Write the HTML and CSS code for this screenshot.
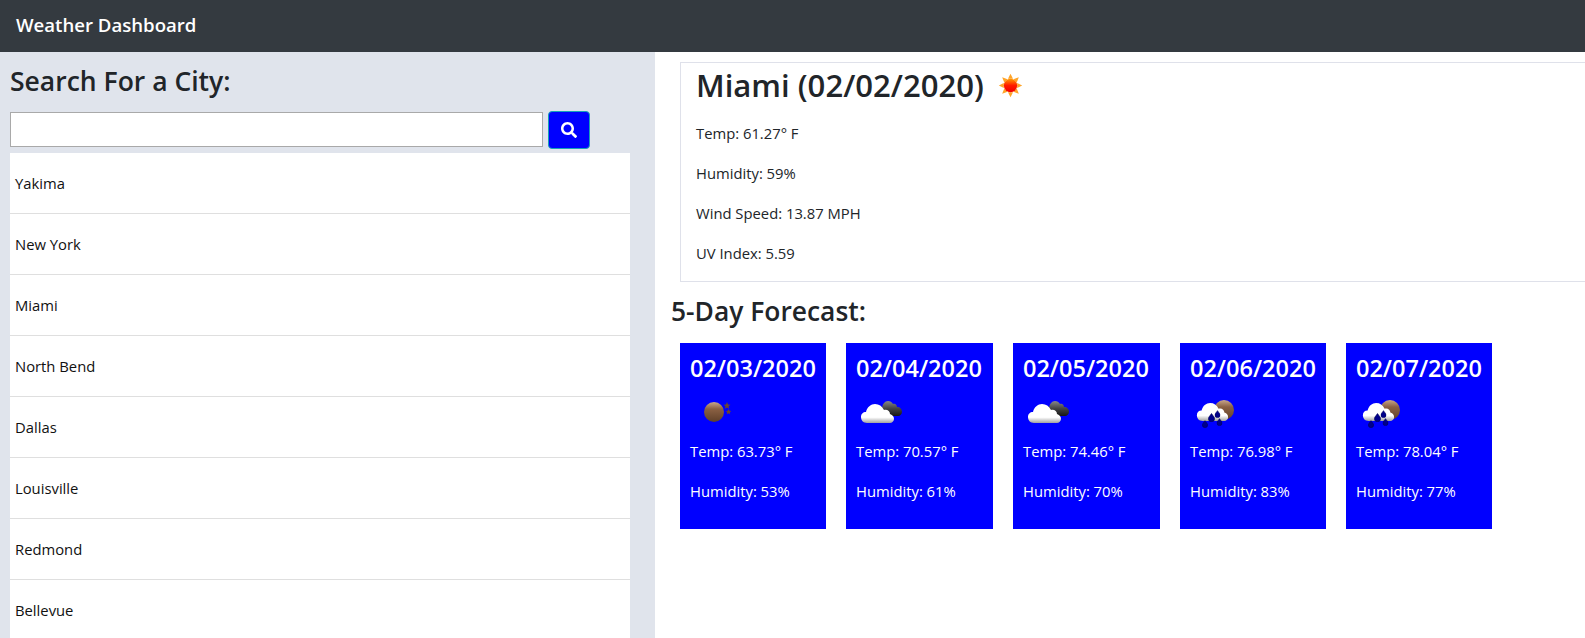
FILE: index.html
```html
<!DOCTYPE html>
<html>
<head>
	<title>Weather Dashboard</title>
	<meta charset="utf-8">
	<link rel="stylesheet" href="styles.css">
</head>
<body>
	<svg class="defs" width="0" height="0">
		<defs>
			<linearGradient id="sun_core" x1="0" y1="0" x2="0" y2="1">
				<stop offset="0" stop-color="#ff9a00"/>
				<stop offset="0.5" stop-color="#ff1a00"/>
				<stop offset="1" stop-color="#f00000"/>
			</linearGradient>
			<linearGradient id="moon_body" x1="0" y1="0" x2="0" y2="1">
				<stop offset="0" stop-color="#c9a78c"/>
				<stop offset="0.35" stop-color="#8a6043"/>
				<stop offset="1" stop-color="#5f4029"/>
			</linearGradient>
			<linearGradient id="cloud_white" x1="0" y1="0" x2="0" y2="1">
				<stop offset="0" stop-color="#fff"/>
				<stop offset="0.7" stop-color="#fff"/>
				<stop offset="1" stop-color="#a0a0a0"/>
			</linearGradient>
			<linearGradient id="cloud_dark" x1="0" y1="0" x2="0" y2="1">
				<stop offset="0" stop-color="#888"/>
				<stop offset="0.5" stop-color="#444"/>
				<stop offset="1" stop-color="#161616"/>
			</linearGradient>
			<symbol id="icon_cloud" viewBox="0 0 33 19">
				<path d="M6 19C2 19 0 16 0 13C0 10 2 8 5 8C6 3 10 0 14 0C18 0 21 2 23 6C26 5 29 7 29 10C32 11 33 13 33 15C33 17 31 19 29 19Z" fill="url(#cloud_white)"/>
			</symbol>
			<symbol id="icon_back_cloud" viewBox="0 0 20 15">
				<path d="M0 8C0 3 3 0 6 0C8 0 10 1 11 3C13 2 15 4 15 6C18 6 20 8 20 11C20 13 18 15 16 15H8Z" fill="url(#cloud_dark)"/>
			</symbol>
			<symbol id="icon_drop" viewBox="0 0 8 10">
				<path d="M4 .5C2.500 3 .5 4.500 .5 6.300a3.500 3.500 0 0 0 7 0C7.500 4.500 5.500 3 4 .5Z" fill="#00008b" stroke="#000060" stroke-width="0.8"/>
			</symbol>
			<symbol id="icon_rain" viewBox="0 0 50 50">
				<circle cx="34" cy="22" r="10" fill="url(#moon_body)"/>
				<use href="#icon_cloud" x="5" y="15" width="35" height="18"/>
				<use href="#icon_drop" x="12" y="32" width="6" height="8"/>
				<use href="#icon_drop" x="18" y="25" width="7" height="9"/>
				<use href="#icon_drop" x="24.500" y="22" width="6" height="8"/>
				<use href="#icon_drop" x="26.500" y="30" width="6" height="8"/>
			</symbol>
			<symbol id="icon_clouds" viewBox="0 0 50 50">
				<use href="#icon_back_cloud" x="26" y="13" width="20" height="15"/>
				<use href="#icon_cloud" x="5" y="16" width="33" height="19"/>
			</symbol>
		</defs>
	</svg>

	<nav class="navbar">Weather Dashboard</nav>

	<div class="layout">
		<aside class="sidebar">
			<h2 class="sidebar_title">Search For a City:</h2>
			<form class="search">
				<input class="search_input" type="text">
				<button class="search_btn" type="button">
					<svg class="search_icon" viewBox="0 0 512 512"><path fill="#fff" d="M505 442.700L405.300 343c-4.500-4.500-10.600-7-17-7H372c27.600-35.300 44-79.700 44-128C416 93.100 322.900 0 208 0S0 93.100 0 208s93.100 208 208 208c48.300 0 92.700-16.400 128-44v16.300c0 6.400 2.500 12.500 7 17l99.700 99.700c9.400 9.400 24.600 9.400 33.900 0l28.300-28.300c9.400-9.400 9.400-24.600.1-34zM208 336c-70.700 0-128-57.200-128-128 0-70.700 57.200-128 128-128 70.700 0 128 57.200 128 128 0 70.700-57.200 128-128 128z"/></svg>
				</button>
			</form>
			<ul class="city_list">
				<li>Yakima</li>
				<li>New York</li>
				<li>Miami</li>
				<li>North Bend</li>
				<li>Dallas</li>
				<li>Louisville</li>
				<li>Redmond</li>
				<li>Bellevue</li>
			</ul>
		</aside>

		<main class="content">
			<section class="today">
				<h1 class="today_title">Miami (02/02/2020)
					<svg class="today_icon" viewBox="0 0 30 30">
						<path fill="#ffa428" d="M15 1l3 6h-6zM15 29l3-6h-6zM1 15l6-3v6zM29 15l-6-3v6zM5 5l6.500 2.500-4 4zM25 5l-2.500 6.500-4-4zM5 25l2.500-6.500 4 4zM25 25l-6.500-2.500 4-4z"/>
						<circle cx="15" cy="15" r="8" fill="url(#sun_core)"/>
					</svg>
				</h1>
				<p>Temp: 61.27° F</p>
				<p>Humidity: 59%</p>
				<p>Wind Speed: 13.87 MPH</p>
				<p>UV Index: 5.59</p>
			</section>

			<h2 class="forecast_title">5-Day Forecast:</h2>
			<div class="forecast">
				<div class="day">
					<h3 class="day_date">02/03/2020</h3>
					<svg class="day_icon" viewBox="0 0 50 50">
						<circle cx="24" cy="24" r="10" fill="url(#moon_body)"/>
						<path d="M37 14l1 2.500 2.500.2-2 1.600.7 2.500-2.200-1.400-2.200 1.400.7-2.500-2-1.600 2.500-.2zM38.500 21l.8 1.800 1.900.2-1.400 1.300.4 1.900-1.700-1-1.700 1 .4-1.900-1.400-1.300 1.900-.2z" fill="#6b4630"/>
					</svg>
					<p>Temp: 63.73° F</p>
					<p>Humidity: 53%</p>
				</div>
				<div class="day day_wide">
					<h3 class="day_date">02/04/2020</h3>
					<svg class="day_icon" viewBox="0 0 50 50"><use href="#icon_clouds"/></svg>
					<p>Temp: 70.57° F</p>
					<p>Humidity: 61%</p>
				</div>
				<div class="day day_wide">
					<h3 class="day_date">02/05/2020</h3>
					<svg class="day_icon" viewBox="0 0 50 50"><use href="#icon_clouds"/></svg>
					<p>Temp: 74.46° F</p>
					<p>Humidity: 70%</p>
				</div>
				<div class="day">
					<h3 class="day_date">02/06/2020</h3>
					<svg class="day_icon" viewBox="0 0 50 50"><use href="#icon_rain"/></svg>
					<p>Temp: 76.98° F</p>
					<p>Humidity: 83%</p>
				</div>
				<div class="day">
					<h3 class="day_date">02/07/2020</h3>
					<svg class="day_icon" viewBox="0 0 50 50"><use href="#icon_rain"/></svg>
					<p>Temp: 78.04° F</p>
					<p>Humidity: 77%</p>
				</div>
			</div>
		</main>
	</div>
</body>
</html>
```

FILE: styles.css
```css
html, body {
	margin: 0px;
	padding: 0px;
	height: 100%;
	overflow: hidden;
}

body {
	display: flex;
	flex-direction: column;
	font-family: "Open Sans", "Noto Sans", sans-serif;
	font-size: 14.800px;
	line-height: 24px;
	color: #212529;
	background-color: #FFF;
}

p {
	margin: 0px 0px 16px 0px;
}

.defs {
	position: absolute;
}

.navbar {
	height: 52px;
	flex: none;
	box-sizing: border-box;
	padding: 13px 16px;
	background-color: #343a40;
	color: #FFF;
	font-size: 18.600px;
	font-weight: 600;
}

.layout {
	display: flex;
	flex: 1;
	min-height: 0;
}

.sidebar {
	width: 655px;
	flex: none;
	box-sizing: border-box;
	padding: 10px 0px 0px 10px;
	background-color: #e0e4ec;
}

.sidebar_title {
	margin: 0px 0px 11px 0px;
	height: 38px;
	font-size: 26.500px;
	font-weight: 600;
	line-height: 38px;
}

.search {
	display: flex;
	align-items: flex-start;
	gap: 5px;
	height: 38px;
}

.search_input {
	width: 533px;
	height: 35px;
	box-sizing: border-box;
	margin-top: 1px;
	border: 1px solid #a9a9a9;
	background-color: #FFF;
	padding: 0px;
}

.search_btn {
	display: flex;
	align-items: center;
	justify-content: center;
	width: 42px;
	height: 38px;
	padding: 0px;
	border: 1px solid #17a2b8;
	border-radius: 4px;
	background-color: #0000FF;
}

.search_icon {
	width: 16px;
	height: 16px;
}

.city_list {
	list-style: none;
	width: 620px;
	margin: 4px 0px 0px 0px;
	padding: 0px;
	background-color: #FFF;
}

.city_list li {
	height: 61px;
	box-sizing: border-box;
	padding: 18px 5px;
	border-bottom: 1px solid #dfdfdf;
	color: #111;
}

.content {
	flex: 1;
	min-width: 0;
	padding: 10px 0px 0px 16px;
}

.today {
	margin: 0px -1px 0px 9px;
	height: 220px;
	box-sizing: border-box;
	padding: 0px 15px;
	border: 1px solid #dfe1ea;
}

.today_title {
	display: flex;
	align-items: center;
	gap: 14px;
	margin: 0px 0px 13px 0px;
	height: 45px;
	font-size: 31.100px;
	font-weight: 600;
	line-height: 45px;
}

.today_icon {
	width: 25px;
	height: 25px;
}

.forecast_title {
	margin: 10px 0px 13px 0px;
	height: 38px;
	font-size: 26.400px;
	font-weight: 600;
	line-height: 38px;
}

.forecast {
	display: flex;
	gap: 20px;
	margin-left: 9px;
}

.day {
	width: 146px;
	height: 186px;
	flex: none;
	box-sizing: border-box;
	padding: 10px;
	background-color: #0000FF;
	color: #FFF;
}

.day_wide {
	width: 147px;
}

.day_date {
	margin: 0px;
	height: 32px;
	font-size: 23.500px;
	font-weight: 600;
	line-height: 30px;
	white-space: nowrap;
}

.day_icon {
	display: block;
	width: 50px;
	height: 50px;
	margin: 3px 0px 1px 0px;
}
```
